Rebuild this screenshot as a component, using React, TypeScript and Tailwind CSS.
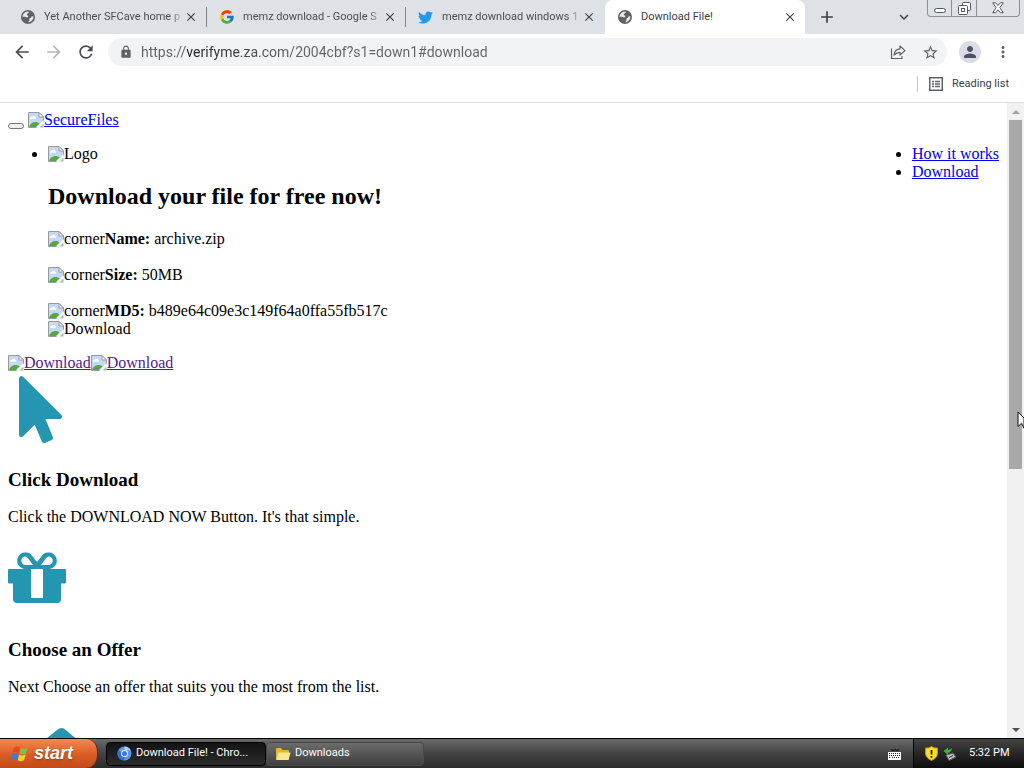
import React from 'react';
import {
  MdArrowBack,
  MdArrowForward,
  MdAdd,
  MdClose,
  MdKeyboardArrowDown,
  MdLock,
  MdMoreVert,
  MdPerson,
  MdRefresh,
  MdStarOutline
} from 'react-icons/md';
import { FcGoogle } from 'react-icons/fc';
import { FaTwitter } from 'react-icons/fa';

interface Tab {
  title: string;
  icon: React.ReactNode;
  active?: boolean;
}

const GlobeIcon: React.FC = () => (
  <svg width="16" height="16" viewBox="0 0 16 16">
    <circle cx="8" cy="8" r="7" fill="#5f6368" />
    <path
      d="M2.500 7.800C2.700 5 4.800 2.800 7.800 2.500c1.200 0 1.300.8.600 1.400-.8.600-1.600.6-1.600 1.500 0 .8.900.8 1.300 1.400.5.900-.2 1.700-1.200 1.700-1 0-1.300-.7-2.400-.7zM13.500 7.500c.1 2.500-1.700 5-4.200 5.700-.9.200-1-.8-.4-1.300.7-.5.800-.9.500-1.500-.3-.7.200-1.200 1-1.400.900-.2.700-1.500 1.700-1.700z"
      fill="#e8eaed"
    />
  </svg>
);

const tabs: Tab[] = [
  { title: 'Yet Another SFCave home p', icon: <GlobeIcon /> },
  { title: 'memz download - Google S', icon: <FcGoogle className="size-4" /> },
  { title: 'memz download windows 1', icon: <FaTwitter className="size-[15px] text-[#1d9bf0]" /> },
  { title: 'Download File!', icon: <GlobeIcon />, active: true }
];

const TabItem: React.FC<{ tab: Tab; divider: boolean }> = ({ tab, divider }) => (
  <div
    className={
      tab.active
        ? 'flex w-[200px] min-w-0 items-center rounded-t-lg bg-white pl-3 pr-2'
        : 'flex w-[199px] min-w-0 items-center pl-3 pr-0'
    }
  >
    <span className="w-4 shrink-0">{tab.icon}</span>
    <span
      className={
        tab.active
          ? 'ml-2 flex-1 overflow-hidden whitespace-nowrap text-[#3c4043]'
          : 'ml-2 flex-1 overflow-hidden whitespace-nowrap text-[#4a4d51] mask-r-from-90%'
      }
    >
      {tab.title}
    </span>
    <button aria-label="Close tab" className="shrink-0 text-[#3c4043]">
      <MdClose className="size-[14px]" />
    </button>
    {!tab.active && (
      <span className={divider ? 'ml-2 h-5 w-px shrink-0 bg-[#80868b]' : 'ml-2 h-5 w-px shrink-0'} />
    )}
  </div>
);

const WindowControls: React.FC = () => (
  <div className="flex h-[17px] self-start rounded-b border border-t-0 border-[#8b8f96] text-[#55585e]">
    <button aria-label="Minimize" className="flex w-6 items-center justify-center border-r border-[#8b8f96]">
      <svg width="12" height="12" viewBox="0 0 12 12" fill="#fff" stroke="currentColor">
        <rect x="0.5" y="6.5" width="11" height="4" rx="2" />
      </svg>
    </button>
    <button aria-label="Restore" className="flex w-[25px] items-center justify-center border-r border-[#8b8f96]">
      <svg width="13" height="13" viewBox="0 0 13 13" fill="#fff" stroke="currentColor">
        <rect x="4.5" y="0.5" width="8" height="8" rx="1" />
        <rect x="0.5" y="3.5" width="9" height="9" rx="1" />
        <rect x="3.5" y="6.5" width="3" height="3" />
      </svg>
    </button>
    <button aria-label="Close" className="flex w-[42px] items-center justify-center">
      <svg width="12" height="12" viewBox="0 0 12 12" fill="#fff" stroke="currentColor">
        <path d="M0.7 0.8h3L6 3.6 8.3.8h3L7.8 5.7l3.5 5h-3L6 7.8l-2.300 2.900h-3l3.500-5z" />
      </svg>
    </button>
  </div>
);

const ShareIcon: React.FC = () => (
  <svg width="16" height="16" viewBox="0 0 16 16" fill="none" stroke="#5f6368" strokeWidth="1.200">
    <path d="M1.500 4.500v10h10.500V12" />
    <path d="M4 11C4.500 7.500 6.500 5 10 4.800V2l5 4.600-5 4.400V8.300C7.500 8.300 5.500 9.500 4 11z" strokeLinejoin="round" />
  </svg>
);

const ReadingListIcon: React.FC = () => (
  <svg width="14" height="14" viewBox="0 0 14 14" fill="none" stroke="#5f6368">
    <rect x="0.75" y="0.75" width="12.500" height="12.500" strokeWidth="1.500" />
    <path d="M3 4.500h2M6 4.500h5M3 7h2M6 7h5M3 9.500h2M6 9.500h5" strokeWidth="1.300" />
  </svg>
);

const BrokenImage: React.FC<{ alt: string }> = ({ alt }) => (
  <>
    <svg className="inline-block align-text-bottom" width="16" height="16" viewBox="0 0 16 16" aria-hidden="true">
      <path d="M0.500 0.500h10.500l4.500 4.500v4L9 15.500H0.500z" fill="#c5d9f2" stroke="#9a9a9a" />
      <path d="M2 6.500c0-1.500 1.200-2.200 2.300-2 .7-1.300 2.700-1 2.900.4 1 .1 1.300 1.600.2 1.900H2z" fill="#fff" />
      <path d="M1 15c1-3.500 4-5 6.500-5 1.500 0 3 .5 4 1.500L8 15z" fill="#53a842" />
      <path d="M11 0.500v4.500h4.500z" fill="#fff" stroke="#9a9a9a" />
      <path d="M8 15.500L15.500 8v2.500l-5 5z" fill="#fff" />
      <path d="M11.500 15.500l4-4v4z" fill="#a9bda9" />
    </svg>
    {alt}
  </>
);

const FileRow: React.FC<{ label: string; value: string }> = ({ label, value }) => (
  <p>
    <BrokenImage alt="corner" />
    <b>{label}</b> {value}
  </p>
);

const PointerArt: React.FC = () => (
  <svg className="block size-20" viewBox="0 0 80 80" fill="#2596b1">
    <g transform="translate(11 4) scale(0.1345 0.131)">
      <path d="M302.189 329.126H196.105l55.831 135.993c3.889 9.428-.555 19.999-9.444 23.999l-49.165 21.427c-9.165 4-19.443-.571-23.332-9.714l-53.053-129.136-86.664 89.138C18.729 472.710 0 463.554 0 447.977V18.299C0 1.899 19.921-6.096 30.277 5.443l284.412 292.542c11.472 11.179 3.007 31.141-12.500 31.141z" />
    </g>
  </svg>
);

const GiftArt: React.FC = () => (
  <svg className="block size-20" viewBox="0 0 80 80">
    <path
      fill="#2596b1"
      fillRule="evenodd"
      d="M1 27h16.500a8.300 8.300 0 1 1 6-14l5.500 7 5.500-7a8.300 8.300 0 1 1 6 14H57q1 0 1 1v12.500q0 1-1 1h-4V57q0 4-4 4H9q-4 0-4-4V41.500H1q-1 0-1-1V28q0-1 1-1zM23 27v29h12V27zM17.500 14.500a4.200 4.200 0 1 0 0 8.400H25l-5-6.600q-1-1.800-2.500-1.800zM40.500 14.500q-1.500 0-2.500 1.800L33 22.900h7.500a4.200 4.200 0 1 0 0-8.400z"
    />
  </svg>
);

const DownloadArt: React.FC = () => (
  <svg className="block size-20" viewBox="0 0 80 80" fill="#2596b1">
    <path d="M50.500 17q3-2 6 0L76 33 53 57 30 33z" />
  </svg>
);

const Step: React.FC<{ art: React.ReactNode; title: string; text: string }> = ({ art, title, text }) => (
  <section className="mb-4">
    {art}
    <h3 className="mt-[17px] text-[19px] leading-[21px] font-bold">{title}</h3>
    <p className="mt-[18px]">{text}</p>
  </section>
);

const Page: React.FC = () => (
  <main className="min-w-0 flex-1 overflow-hidden p-2 font-['Liberation_Serif',serif] text-base leading-[18px] text-black">
    <div className="flex h-[18px] items-end gap-1">
      <button aria-label="Toggle navigation" className="h-[6px] w-4 rounded-[3px] border border-[#767676] bg-[#efefef]" />
      <a href="#home" className="text-[#0000ee] underline">
        <BrokenImage alt="SecureFiles" />
      </a>
    </div>

    <div className="mt-4 flex items-start justify-between">
      <ul className="list-disc pl-10">
        <li>
          <BrokenImage alt="Logo" />
          <h2 className="my-5 text-2xl leading-[27px] font-bold">Download your file for free now!</h2>
          <div className="flex flex-col gap-[18px]">
            <FileRow label="Name:" value="archive.zip" />
            <FileRow label="Size:" value="50MB" />
            <FileRow label="MD5:" value="b489e64c09e3c149f64a0ffa55fb517c" />
          </div>
          <div>
            <BrokenImage alt="Download" />
          </div>
        </li>
      </ul>
      <ul className="list-disc text-[#0000ee] marker:text-black">
        <li>
          <a href="#how" className="underline">How it works</a>
        </li>
        <li>
          <a href="#download" className="underline">Download</a>
        </li>
      </ul>
    </div>

    <div className="mt-4 text-[#551a8b]">
      <a href="#download" className="underline"><BrokenImage alt="Download" /></a>
      <a href="#download" className="underline"><BrokenImage alt="Download" /></a>
    </div>

    <Step art={<PointerArt />} title="Click Download" text="Click the DOWNLOAD NOW Button. It's that simple." />
    <Step art={<GiftArt />} title="Choose an Offer" text="Next Choose an offer that suits you the most from the list." />
    <DownloadArt />
  </main>
);

const Scrollbar: React.FC = () => (
  <div className="flex w-[17px] shrink-0 flex-col bg-[#f1f1f1]">
    <button aria-label="Scroll up" className="flex h-[17px] items-center justify-center">
      <svg width="8" height="4" viewBox="0 0 8 4" fill="#a3a3a3"><path d="M4 0l4 4H0z" /></svg>
    </button>
    <div className="flex-1 px-[2px]">
      <div className="h-[58%] bg-[#a8a8a8]" />
    </div>
    <button aria-label="Scroll down" className="flex h-[17px] items-center justify-center">
      <svg width="8" height="4" viewBox="0 0 8 4" fill="#505050"><path d="M0 0h8L4 4z" /></svg>
    </button>
  </div>
);

const Taskbar: React.FC = () => (
  <footer className="flex h-[30px] shrink-0 border-t border-black bg-linear-to-b from-[#6a6a6a] via-[#444] via-50% to-[#2c2c2c] text-[11px] text-white">
    <button className="flex w-[98px] items-center gap-1 rounded-r-xl border-r border-[#5a2410] bg-linear-to-b from-[#f08a50] via-[#dd5f27] via-50% to-[#c04a18] pl-[10px]">
      <svg width="20" height="18" viewBox="0 0 20 18">
        <path d="M4 2.500q3-2 6 0L8.500 8q-3-1.800-6 0z" fill="#e8481c" />
        <path d="M11 3q3 2 6.500 0L16 8.500q-3 2-6.500 0z" fill="#7cc142" />
        <path d="M2.200 9q3-1.800 6 0L6.700 14.500q-3-1.800-6 0z" fill="#3b7be0" />
        <path d="M9.200 9.500q3 2 6.500 0L14 15.200q-3 2-6.300 0z" fill="#fbd12c" />
      </svg>
      <span className="font-['Liberation_Sans',sans-serif] text-[18px] font-bold italic text-shadow-md">start</span>
    </button>
    <div className="ml-2 flex min-w-0 flex-1 items-center">
      <button className="flex h-6 w-[160px] items-center gap-1 rounded-sm border border-black bg-linear-to-b from-[#141414] to-[#2b2b2b] pl-[10px]">
        <svg width="15" height="15" viewBox="0 0 15 15">
          <circle cx="7.500" cy="7.500" r="7" fill="#5e97e8" />
          <path d="M7.500 0.500a7 7 0 0 1 6.200 3.800H7.500z" fill="#a9ccf8" />
          <path d="M1.300 4.200a7 7 0 0 0 5.200 10.200L9.700 9z" fill="#2f6fd6" />
          <circle cx="7.500" cy="7.500" r="3.500" fill="#fff" />
          <circle cx="7.500" cy="7.500" r="2.600" fill="#3b7be0" />
        </svg>
        <span className="whitespace-nowrap">Download File! - Chro...</span>
      </button>
      <button className="flex h-6 w-[158px] items-center gap-1 rounded-sm border border-[#4a4a4a] bg-linear-to-b from-[#6b6b6b] to-[#404040] pl-2">
        <svg width="16" height="14" viewBox="0 0 16 14">
          <path d="M1 2q0-1 1-1h4l1.500 2H13q1 0 1 1v8.500H1z" fill="#e3b53c" />
          <path d="M3.500 5.500h12L13.500 13H1.200z" fill="#fbe88a" />
        </svg>
        <span>Downloads</span>
      </button>
    </div>
    <div className="flex w-7 items-center pl-[3px]">
      <svg width="13" height="12" viewBox="0 0 13 12">
        <path d="M3 1.500l2 1 2-1 2 1 2-1" fill="none" stroke="#111" />
        <rect y="4" width="13" height="8" fill="#fff" />
        <path d="M1 5.500h11M1 7.500h11M1 9.500h2M4 9.500h5M10 9.500h2" stroke="#222" strokeDasharray="1 1" />
      </svg>
    </div>
    <div className="flex w-[111px] items-center border-l border-black bg-linear-to-b from-[#444] to-[#0d0d0d] pl-[11px]">
      <svg width="13" height="15" viewBox="0 0 13 15">
        <path d="M6.500 0.500q3 2 6 1.500v5q0 5-6 7.500-6-2.500-6-7.500v-5q3 .5 6-1.500z" fill="#fbdc2a" stroke="#b89412" />
        <path d="M6.500 4v4.500M6.500 10v1.800" stroke="#222" strokeWidth="1.800" />
      </svg>
      <svg className="ml-[5px]" width="14" height="14" viewBox="0 0 14 14">
        <path d="M3 8l7-2 3 4-7 3.500z" fill="#b9bec4" stroke="#555" />
        <path d="M6 10.500l4-2" stroke="#333" />
        <path d="M0.500 4L5 0.500V3q3-.5 4-2-.2 4-4 5v2z" fill="#35b535" />
      </svg>
      <span className="ml-3 whitespace-nowrap">5:32 PM</span>
    </div>
  </footer>
);

const App: React.FC = () => (
  <div className="relative flex h-screen flex-col overflow-hidden bg-white font-[Roboto,sans-serif]">
    <header className="shrink-0 border-b border-[#dadce0] text-[11px] text-[#3c4043]">
      <div className="flex h-[34px] bg-[#dee1e6] pl-2 pr-1">
        {tabs.map((tab, i) => (
          <TabItem key={tab.title} tab={tab} divider={i < 2} />
        ))}
        <button aria-label="New tab" className="ml-3">
          <MdAdd className="size-5" />
        </button>
        <button aria-label="Search tabs" className="mr-[14px] ml-auto">
          <MdKeyboardArrowDown className="size-[18px]" />
        </button>
        <WindowControls />
      </div>

      <div className="flex h-9 items-center pr-3 pl-3 text-[#5f6368]">
        <button aria-label="Back" className="text-[#4a4d51]">
          <MdArrowBack className="size-5" />
        </button>
        <button aria-label="Forward" className="ml-3 text-[#b5b7ba]">
          <MdArrowForward className="size-5" />
        </button>
        <button aria-label="Reload" className="ml-3 text-[#4a4d51]">
          <MdRefresh className="size-5" />
        </button>
        <div className="ml-3 flex h-7 flex-1 items-center rounded-full bg-[#f1f3f4] pr-2 pl-[11px]">
          <MdLock className="size-[14px] shrink-0" />
          <input
            aria-label="Address"
            defaultValue="https://verifyme.za.com/2004cbf?s1=down1#download"
            className="ml-2 min-w-0 flex-1 bg-linear-to-r from-[#5f6368] from-[46px] via-[#202124] via-[46px] to-[#5f6368] to-[148px] bg-clip-text text-[14px] text-transparent outline-none"
          />
          <button aria-label="Share">
            <ShareIcon />
          </button>
          <button aria-label="Bookmark" className="ml-4">
            <MdStarOutline className="size-[17px]" />
          </button>
        </div>
        <button aria-label="Profile" className="ml-3 flex size-[22px] items-center justify-center rounded-full bg-[#dadce6] text-[#4d5263]">
          <MdPerson className="size-[18px]" />
        </button>
        <button aria-label="Menu" className="ml-[13px]">
          <MdMoreVert className="size-[18px]" />
        </button>
      </div>

      <div className="flex h-8 items-center justify-end pr-[15px] pb-1">
        <span className="h-4 w-px bg-[#c4c7cc]" />
        <button className="ml-[11px] flex items-center gap-[9px]">
          <ReadingListIcon />
          Reading list
        </button>
      </div>
    </header>

    <div className="flex min-h-0 flex-1">
      <Page />
      <Scrollbar />
    </div>

    <Taskbar />

    {/* mouse pointer resting on the scrollbar */}
    <svg className="absolute top-[411px] right-0" width="7" height="18" viewBox="0 0 7 18">
      <path d="M1 1v14.500l3.500-3.200 2.500 5V7z" fill="#fff" stroke="#111" />
    </svg>
  </div>
);

export default App;
